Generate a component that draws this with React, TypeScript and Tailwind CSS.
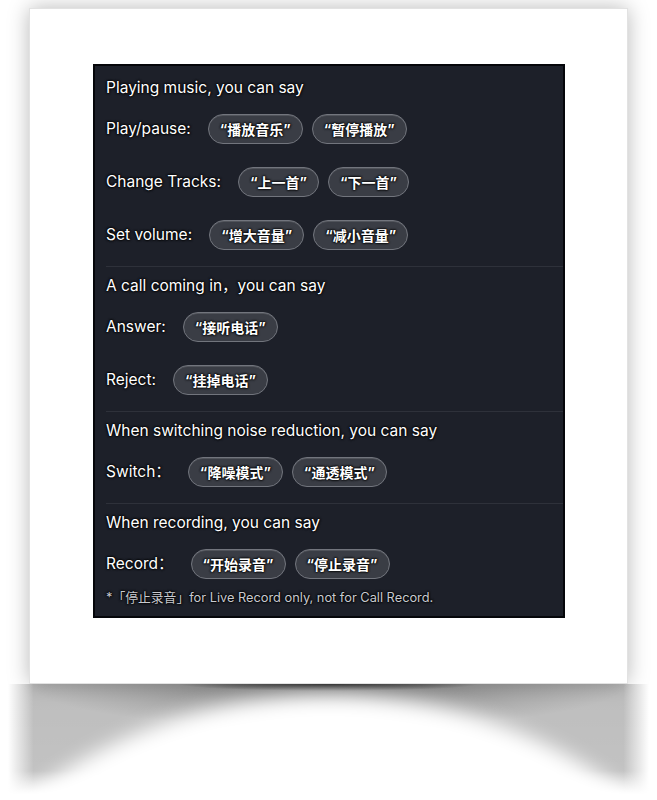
import React from "react";

// Voice command cheat sheet, shown as a printed card with a lifted-paper shadow

type Row = { label: string; phrases: string[] };
type Section = { title: string; rows: Row[] };

const sections: Section[] = [
  {
    title: "Playing music, you can say",
    rows: [
      { label: "Play/pause:", phrases: ["播放音乐", "暂停播放"] },
      { label: "Change Tracks:", phrases: ["上一首", "下一首"] },
      { label: "Set volume:", phrases: ["增大音量", "减小音量"] },
    ],
  },
  {
    title: "A call coming in，you can say",
    rows: [
      { label: "Answer:", phrases: ["接听电话"] },
      { label: "Reject:", phrases: ["挂掉电话"] },
    ],
  },
  {
    title: "When switching noise reduction, you can say",
    rows: [{ label: "Switch：", phrases: ["降噪模式", "通透模式"] }],
  },
  {
    title: "When recording, you can say",
    rows: [{ label: "Record：", phrases: ["开始录音", "停止录音"] }],
  },
];

function Pill({ text }: { text: string }) {
  return (
    <span className="flex h-[30px] items-center rounded-full border border-[#72757d] bg-[#3a3d45] px-[11px] text-[14px] font-bold text-white shadow-[inset_0_1px_0_rgba(255,255,255,0.12)]">
      “{text}”
    </span>
  );
}

function CommandRow({ row, first }: { row: Row; first: boolean }) {
  return (
    <div className={`flex h-[30px] items-center ${first ? "mt-[15px]" : "mt-[23px]"}`}>
      <span className="mr-[17px] text-[15.5px] text-white">{row.label}</span>
      <div className="flex gap-[9px]">
        {row.phrases.map((p) => (
          <Pill key={p} text={p} />
        ))}
      </div>
    </div>
  );
}

export default function App() {
  return (
    <div className="flex h-[800px] w-[657px] flex-col overflow-hidden bg-white">
      {/* Paper card */}
      <div className="mx-[29px] mt-[8px] h-[676px] w-[599px] shrink-0 border border-[#e2e2e2] bg-white pl-[63px] pt-[55px] shadow-[0_0_20px_rgba(0,0,0,0.28)]">
        <div className="flex h-[554px] w-[472px] flex-col border-2 border-[#05060a] bg-[#1d2029] pb-[10px] pl-[11px] pt-[11px] font-['Inter','Noto_Sans_CJK_SC',sans-serif] text-white [text-shadow:0_0_2px_#000,0_0_2px_#000,0_0_3px_#000]">
          {sections.map((s, i) => (
            <div key={s.title} className="flex flex-col">
              {i > 0 && <div className="mt-[16px] h-px bg-[#2e313a]" />}
              <div className={`flex h-[22px] items-center text-[15.5px] ${i > 0 ? "mt-[8px]" : ""}`}>{s.title}</div>
              {s.rows.map((r, j) => (
                <CommandRow key={r.label} row={r} first={j === 0} />
              ))}
            </div>
          ))}
          <div className="mt-[11px] flex h-[16px] items-center text-[12.8px] text-[#c8cad0]">
            *「停止录音」for Live Record only, not for Call Record.
          </div>
        </div>
      </div>

      {/* Curled paper shadow below the card */}
      <div className="mx-[8px] flex h-[116px] shrink-0 justify-center overflow-hidden bg-[radial-gradient(ellipse_150px_7px_at_50%_0px,rgba(0,0,0,0.8),rgba(0,0,0,0)),radial-gradient(ellipse_300px_45px_at_50%_0px,rgba(0,0,0,0.32),rgba(0,0,0,0)),linear-gradient(to_right,rgba(255,255,255,1),rgba(255,255,255,0)_4%,rgba(255,255,255,0)_96%,rgba(255,255,255,1)),linear-gradient(to_bottom,rgba(0,0,0,0.26),rgba(0,0,0,0.24)_75%,rgba(0,0,0,0)_95%)]">
        <div className="mt-[11px] h-[1000px] w-[1000px] shrink-0 rounded-full bg-white blur-[10px]" />
      </div>
    </div>
  );
}
